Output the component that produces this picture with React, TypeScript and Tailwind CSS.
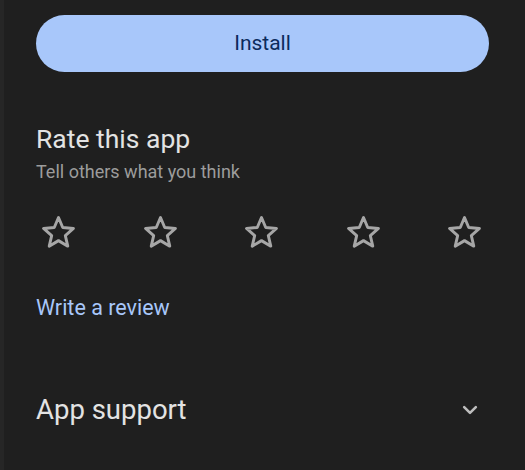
import React from "react";

function StarOutline() {
  return (
    <svg viewBox="0 0 24 24" className="w-[39px] h-[39px]" fill="none" stroke="#a6a6a6" strokeWidth="1.8" strokeLinejoin="round">
      <path d="M12 2.8l2.6 6.1 6.6.6-5 4.4 1.5 6.5L12 17l-5.7 3.4 1.5-6.5-5-4.4 6.6-.6z" />
    </svg>
  );
}

export default function App() {
  return (
    <div className="w-[525px] h-[470px] bg-[#1f1f1f] text-[#e3e3e3] overflow-hidden border-l-[4px] border-[#262626]" style={{ fontFamily: "Roboto, 'Noto Sans', sans-serif" }}>
      <div className="pl-[32px] pr-[36px] pt-[15px]">
        {/* Install button */}
        <button className="w-full h-[57px] rounded-full bg-[#a8c7fa] text-[#0b2a5c] text-[21px] flex items-center justify-center">
          Install
        </button>

        {/* Rate this app */}
        <div className="mt-[51px]">
          <h2 className="text-[26.5px] leading-[32px]">Rate this app</h2>
          <p className="text-[18px] leading-[22px] text-[#9c9c9c] mt-[6px]">Tell others what you think</p>
        </div>

        <div className="flex justify-between items-center mt-[30px] ml-[3px] mr-[5px]">
          {[0, 1, 2, 3, 4].map((i) => (
            <StarOutline key={i} />
          ))}
        </div>

        <div className="mt-[43px] text-[21.5px] leading-[26px] text-[#a8c7fa]">Write a review</div>

        {/* App support */}
        <div className="mt-[72px] flex items-center justify-between">
          <span className="text-[27.5px] leading-[34px]">App support</span>
          <svg viewBox="0 0 24 24" className="w-[28px] h-[28px] mr-[5px]" fill="none" stroke="#bdbdbd" strokeWidth="2.2" strokeLinecap="round" strokeLinejoin="round">
            <path d="M7 9.5l5 5 5-5" />
          </svg>
        </div>
      </div>
    </div>
  );
}
